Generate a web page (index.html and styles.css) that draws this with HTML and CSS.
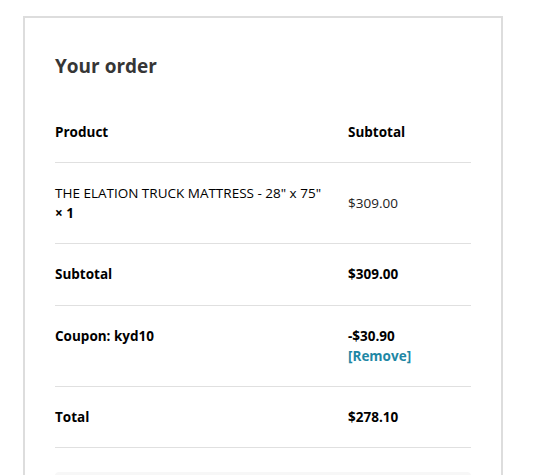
FILE: index.html
```html
<!DOCTYPE html>
<html>
<head>
<meta charset="utf-8">
<link rel="stylesheet" href="styles.css">
</head>
<body>
<div class="page">
  <section class="order">
    <h3 class="order-title">Your order</h3>
    <table class="order-table">
      <thead>
        <tr>
          <th class="col-product">Product</th>
          <th class="col-total">Subtotal</th>
        </tr>
      </thead>
      <tbody>
        <tr class="cart-item">
          <td class="col-product">THE ELATION TRUCK MATTRESS - 28" x 75"<br><strong class="qty">× 1</strong></td>
          <td class="col-total price">$309.00</td>
        </tr>
      </tbody>
      <tfoot>
        <tr class="subtotal">
          <th class="col-product">Subtotal</th>
          <td class="col-total strong">$309.00</td>
        </tr>
        <tr class="coupon">
          <th class="col-product">Coupon: kyd10</th>
          <td class="col-total strong">-$30.90<br><a class="remove" href="#">[Remove]</a></td>
        </tr>
        <tr>
          <th class="col-product">Total</th>
          <td class="col-total strong">$278.10</td>
        </tr>
      </tfoot>
    </table>
    <div class="payment"></div>
  </section>
</div>
</body>
</html>
```
FILE: styles.css
```css
html, body {
  margin: 0;
  padding: 0;
  background: #fff;
  overflow: hidden;
}
body {
  font-family: "Open Sans", "Noto Sans", sans-serif;
  font-size: 13.5px;
  line-height: 20px;
  color: #000;
}
.page {
  padding: 16px 0 0 23px;
}
.order {
  box-sizing: border-box;
  width: 480px;
  border: 2px solid #dddddd;
  border-bottom: none;
  padding: 34px 30px 0;
  min-height: 480px;
}
.order-title {
  margin: 0 0 22px;
  font-size: 19px;
  line-height: 28px;
  font-weight: 700;
  color: #363636;
}
.order-table {
  width: 100%;
  border-collapse: collapse;
}
.order-table th,
.order-table td {
  padding: 20px 0;
  text-align: left;
  vertical-align: middle;
  border-bottom: 1px solid #e0e0e0;
}
.order-table th {
  font-weight: 700;
}
.col-product {
  width: 293px;
}
.price {
  color: #222;
}
.strong {
  font-weight: 700;
}
.qty {
  font-weight: 700;
}
.subtotal th,
.subtotal td {
  padding-bottom: 21px;
}
.coupon th,
.coupon td {
  vertical-align: top;
}
.remove {
  color: #1e87a5;
  text-decoration: none;
  font-weight: 700;
}
.payment {
  margin-top: 24px;
  height: 60px;
  background: #f7f7f7;
  border-radius: 4px;
}
```
